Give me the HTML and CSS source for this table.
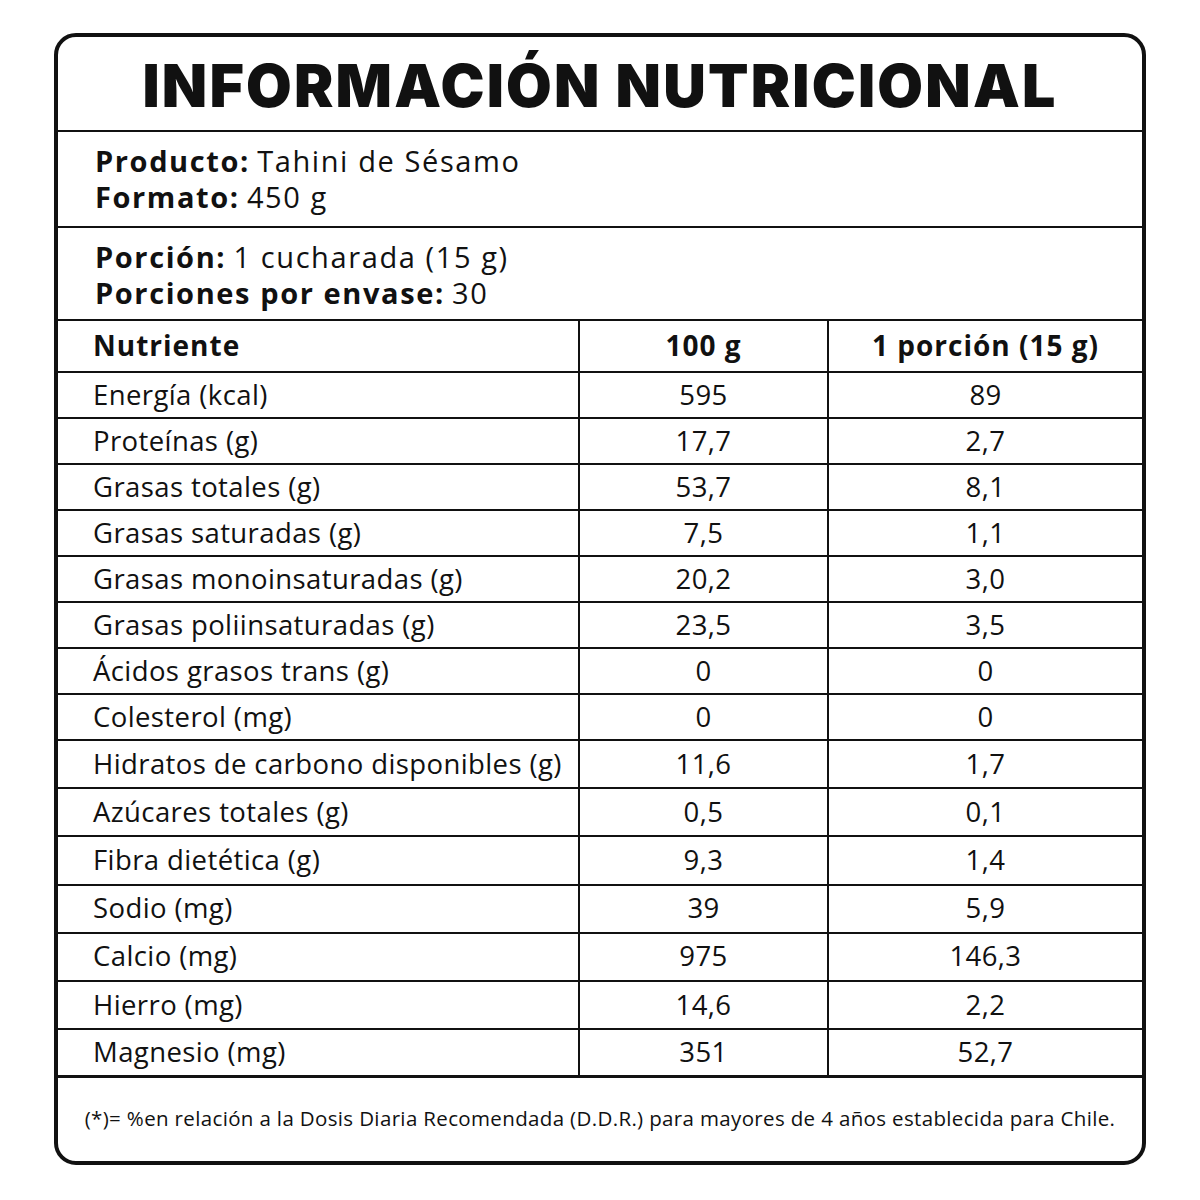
FILE: index.html
```html
<!DOCTYPE html>
<html lang="es">
<head>
<meta charset="utf-8">
<title>Información Nutricional</title>
<link rel="stylesheet" href="styles.css">
</head>
<body>
<div class="label">
  <div class="title">INFORMACIÓN NUTRICIONAL</div>
  <div class="info info-1">
    <div class="line"><b>Producto:</b> Tahini de Sésamo</div>
    <div class="line"><b>Formato:</b> 450 g</div>
  </div>
  <div class="info info-2">
    <div class="line"><b>Porción:</b> 1 cucharada (15 g)</div>
    <div class="line"><b>Porciones por envase:</b> 30</div>
  </div>
  <div class="table">
    <div class="row head"><div class="c name">Nutriente</div><div class="c v1">100 g</div><div class="c v2">1 porción (15 g)</div></div>
    <div class="row r46"><div class="c name">Energía (kcal)</div><div class="c v1">595</div><div class="c v2">89</div></div>
    <div class="row r46"><div class="c name">Proteínas (g)</div><div class="c v1">17,7</div><div class="c v2">2,7</div></div>
    <div class="row r46"><div class="c name">Grasas totales (g)</div><div class="c v1">53,7</div><div class="c v2">8,1</div></div>
    <div class="row r46"><div class="c name">Grasas saturadas (g)</div><div class="c v1">7,5</div><div class="c v2">1,1</div></div>
    <div class="row r46"><div class="c name">Grasas monoinsaturadas (g)</div><div class="c v1">20,2</div><div class="c v2">3,0</div></div>
    <div class="row r46"><div class="c name">Grasas poliinsaturadas (g)</div><div class="c v1">23,5</div><div class="c v2">3,5</div></div>
    <div class="row r46"><div class="c name">Ácidos grasos trans (g)</div><div class="c v1">0</div><div class="c v2">0</div></div>
    <div class="row r46"><div class="c name">Colesterol (mg)</div><div class="c v1">0</div><div class="c v2">0</div></div>
    <div class="row r48"><div class="c name">Hidratos de carbono disponibles (g)</div><div class="c v1">11,6</div><div class="c v2">1,7</div></div>
    <div class="row r48"><div class="c name">Azúcares totales (g)</div><div class="c v1">0,5</div><div class="c v2">0,1</div></div>
    <div class="row r48"><div class="c name">Fibra dietética (g)</div><div class="c v1">9,3</div><div class="c v2">1,4</div></div>
    <div class="row r48"><div class="c name">Sodio (mg)</div><div class="c v1">39</div><div class="c v2">5,9</div></div>
    <div class="row r48"><div class="c name">Calcio (mg)</div><div class="c v1">975</div><div class="c v2">146,3</div></div>
    <div class="row r48"><div class="c name">Hierro (mg)</div><div class="c v1">14,6</div><div class="c v2">2,2</div></div>
    <div class="row r48 last"><div class="c name">Magnesio (mg)</div><div class="c v1">351</div><div class="c v2">52,7</div></div>
  </div>
  <div class="foot">(*)= %en relación a la Dosis Diaria Recomendada (D.D.R.) para mayores de 4 años establecida para Chile.</div>
</div>
</body>
</html>
```
FILE: styles.css
```css
* { box-sizing: border-box; }
html, body { margin: 0; padding: 0; background: #fff; }
body {
  font-family: "Open Sans", "Noto Sans", sans-serif;
  color: #111;
}
.label {
  margin: 33px 0 0 54px;
  width: 1092px;
  height: 1132px;
  border: 4px solid #111;
  border-radius: 22px;
  display: flex;
  flex-direction: column;
  overflow: hidden;
}
.title {
  height: 95px;
  border-bottom: 2px solid #111;
  display: flex;
  align-items: center;
  justify-content: center;
  font-family: "Inter", "Lato", sans-serif;
  font-weight: 900;
  font-size: 59px;
  line-height: 1;
  letter-spacing: 2.2px;
  padding-top: 4px;
}
.info {
  border-bottom: 2px solid #111;
  padding-left: 37px;
  font-size: 29px;
  letter-spacing: 1.6px;
}
.info .line { line-height: 1; height: 35.5px; display: flex; align-items: center; }
.info-1 { height: 96px; padding-top: 11px; }
.info-2 { height: 93px; padding-top: 11px; }
.info b { font-weight: 700; margin-right: 0.25em; }
.table { display: flex; flex-direction: column; }
.row {
  display: grid;
  grid-template-columns: 522px 249px 1fr;
  border-bottom: 2px solid #111;
  font-size: 27.5px;
  letter-spacing: 0.4px;
}
.row.head { height: 52px; font-weight: 700; font-size: 28px; letter-spacing: 1px; }
.row.r46 { height: 46px; }
.row.r48 { height: 48.2px; }
.row.last { border-bottom-width: 3px; }
.c {
  display: flex;
  align-items: center;
  padding-bottom: 2px;
}
.c.name { padding-left: 35px; border-right: 2px solid #111; }
.c.v1 { justify-content: center; border-right: 2px solid #111; }
.c.v2 { justify-content: center; }
.foot {
  flex: 1;
  display: flex;
  align-items: center;
  justify-content: center;
  font-size: 20.5px;
  letter-spacing: 0.35px;
  padding-bottom: 4px;
}
```
